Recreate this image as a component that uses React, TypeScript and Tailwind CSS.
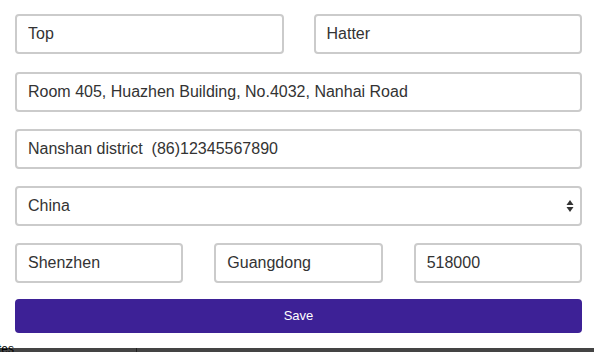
import React from 'react';

const field =
  'h-[40px] w-full rounded-[4px] border-2 border-[#cbcbcb] bg-white px-[11px] text-[16px] text-[#333] outline-none';

const App: React.FC = () => {
  return (
    <div className="h-[352px] w-[594px] overflow-hidden bg-white" style={{ fontFamily: '"Liberation Sans", Arial, sans-serif' }}>
      <div className="flex flex-col gap-[17px] pl-[15px] pr-[12px] pt-[14px]">
        {/* Name row */}
        <div className="grid grid-cols-2 gap-[30px]">
          <input className={field} defaultValue="Top" />
          <input className={field} defaultValue="Hatter" />
        </div>

        {/* Address lines */}
        <input className={`${field} mt-px bg-[#e8f0fe]`} defaultValue="Room 405, Huazhen Building, No.4032, Nanhai Road" />
        <input className={field} defaultValue="Nanshan district  (86)12345567890" />

        {/* Country */}
        <div className="relative">
          <select className={`${field} appearance-none`} defaultValue="China">
            <option>China</option>
          </select>
          <svg className="pointer-events-none absolute right-[8px] top-[13px]" width="8" height="14" viewBox="0 0 8 14">
            <path d="M4 1 L7.5 6 L0.5 6 Z" fill="#333" />
            <path d="M4 13 L7.5 8 L0.5 8 Z" fill="#333" />
          </svg>
        </div>

        {/* City / state / zip */}
        <div className="grid grid-cols-3 gap-[31px]">
          <input className={field} defaultValue="Shenzhen" />
          <input className={field} defaultValue="Guangdong" />
          <input className={field} defaultValue="518000" />
        </div>

        <button className="-mt-px h-[34px] w-full rounded-[4px] bg-[#3d2196] text-[13px] text-white">Save</button>
      </div>

      {/* Clipped content below */}
      <div className="mt-[15px] flex h-[10px] bg-[#444]">
        <div className="w-[137px] border-r border-[#222] bg-[#444] text-[12px] leading-[10px] text-black">
          <span className="-ml-[2px] block -translate-y-[4px]">tes</span>
        </div>
      </div>
    </div>
  );
};

export default App;
